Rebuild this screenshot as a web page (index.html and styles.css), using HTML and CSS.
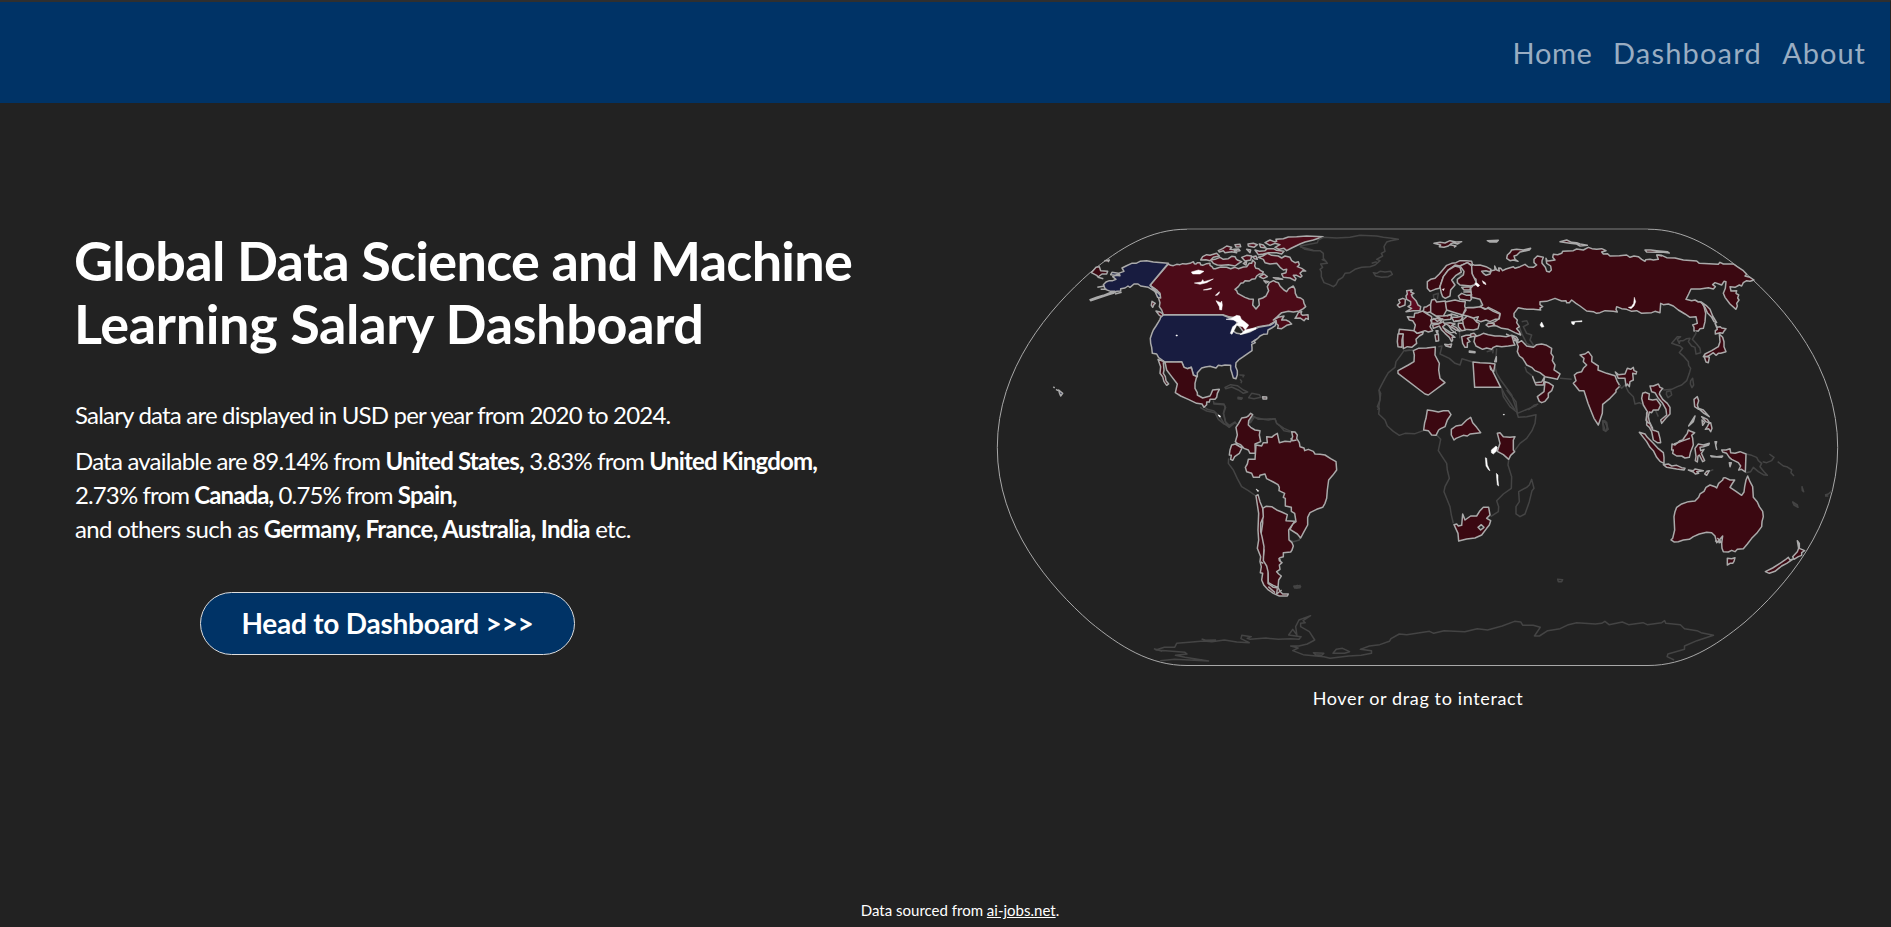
FILE: index.html
```html
<!DOCTYPE html>
<html lang="en">
<head>
<meta charset="utf-8">
<title>Global Data Science and Machine Learning Salary Dashboard</title>
<link rel="stylesheet" href="styles.css">
</head>
<body>
<header class="navbar">
  <nav class="nav-links">
    <a class="nav-home">Home</a>
    <a class="nav-dash">Dashboard</a>
    <a class="nav-about">About</a>
  </nav>
</header>
<main class="landing">
  <section class="intro">
    <h1><span class="title-top">Global Data Science and Machine</span><br>Learning Salary Dashboard</h1>
    <p class="lead">Salary data are displayed in USD per year from 2020 to 2024.</p>
    <p class="shares">Data available are 89.14% from <b>United States,</b> 3.83% from <b>United Kingdom,</b><br><span class="tight">2.73% from <b>Canada,</b> 0.75% from <b>Spain,</b></span><br><span class="loose">and others such as <b>Germany, France, Australia, India</b> etc.</span></p>
    <a class="cta">Head to Dashboard &gt;&gt;&gt;</a>
  </section>
  <section class="map">
    <svg class="world" viewBox="990 220 856 454" width="856" height="454">
      <!-- globe frame -->
      <path class="frame" d="M1187 665.5C1150 665.5 1120 646.7 1090 622C1050 586.7 997.3 526.7 997.3 447.4C997.3 368 1050 308 1090 272.7C1120 248 1150 229.2 1187 229.2M1648 229.2C1685 229.2 1715 248 1745 272.7C1785 308 1837.7 368 1837.7 447.4C1837.7 526.7 1785 586.7 1745 622C1715 646.7 1685 665.5 1648 665.5H1187"/>
      <path class="frame-top" d="M1187 229H1648"/>

      <!-- North America -->
      <g transform="translate(980 210) scale(.33333)">
        <path class="ghost" d="M735 532L752 524L772 527L790 540L803 546L790 550L775 540L755 531L737 536ZM806 563L815 550L838 554L843 562L822 566ZM774 562L787 564L784 568L774 566ZM778 495L792 496L788 502M780 508L785 514L783 520M672 590L682 598L702 603L718 618M700 572L702 582L732 584L737 592L731 610L737 636L748 646L765 636L770 643M718 618L732 640L748 652L754 645M808 612L815 625L812 638L822 622L850 628L885 626L890 640L912 655L940 667M960 110L1000 121"/>
        <path class="ca" d="M565 162L572 166L580 167L590 163L600 164L608 161L618 162L630 160L640 155L643 161L648 162L652 158L660 158L662 164L668 166L680 161L690 160L690 166L696 170L700 176L706 176L722 171L740 172L752 176L765 172L775 176L790 171L800 170L808 160L815 160L818 150L826 158L824 168L828 175L836 176L842 182L850 186L846 192L838 192L830 198L826 206L815 208L808 213L795 212L790 218L782 220L775 230L765 238L770 242L773 250L784 256L795 262L808 267L820 268L818 285L828 297L838 285L836 268L848 264L858 258L866 242L862 230L868 218L880 212L888 216L895 218L900 228L912 240L920 245L926 236L940 228L945 238L946 250L952 262L962 264L970 270L972 280L977 290L970 296L958 303L940 306L925 304L905 308L892 320L880 330L895 322L912 318L905 330L918 330L928 335L935 342L920 346L905 356L893 355L895 346L890 342L888 332L868 345L835 350L810 360L790 365L775 345L760 325L728 314L550 314L545 300L538 290L540 278L535 262L530 240L510 226Z"/>
        <path class="ca" d="M945 325L950 318L955 308L965 304L963 312L968 316L984 314L985 328L978 325L972 332L960 324ZM528 303L540 306L548 312L550 322L538 316ZM516 274L526 280L522 283L518 292L514 286ZM662 150L668 140L680 134L690 136L710 130L718 138L700 142L690 152L678 149ZM692 150L705 148L720 142L730 148L745 146L755 139L765 140L768 146L772 150L785 155L776 160L765 168L745 164L725 166L712 165L700 160ZM715 122L728 116L740 108L755 112L750 118L768 120L770 128L755 125L735 128L730 122L718 126ZM765 104L780 103L782 110L768 111ZM762 118L776 117L780 122L764 124ZM804 102L820 100L832 104L822 112L805 108ZM800 118L812 120L810 128ZM838 102L850 105L858 114L842 112ZM785 142L800 136L815 138L812 150L795 153ZM790 160L800 155L798 165ZM855 98L870 90L882 95L890 94L888 88L910 86L925 81L950 80L980 78L1030 80L1000 90L975 96L960 102L935 114L920 122L912 115L898 118L885 112L900 104L885 100L870 106ZM825 120L838 124L855 122L862 116L880 116L890 121L912 124L905 132L890 128L865 128L850 132L835 134ZM818 140L828 138L832 148L824 146ZM835 142L848 138L862 130L875 136L895 138L905 144L915 138L930 142L935 152L945 158L955 155L958 164L952 170L965 175L977 183L968 182L960 190L966 198L962 202L950 196L940 196L948 206L945 212L930 204L910 202L905 192L918 188L920 178L910 180L900 172L890 160L870 162L855 158L850 148ZM838 200L852 192L862 200L850 206ZM852 212L866 215L858 219ZM880 203L895 204L908 208L888 207Z"/>
        <path class="land" d="M334 188L348 172L358 170L362 182L383 184L380 192L366 192L354 201L350 196ZM373 152L388 150L384 156M354 202L370 206"/>
        <path class="us" d="M565 160L510 226L530 240L540 250L542 264L533 262L525 244L505 232L482 228L474 222L462 222L450 232L444 228L435 234L422 236L422 243L410 244L400 250L385 254L332 272L330 269L350 262L370 256L390 248L405 244L392 244L376 238L370 224L378 216L388 212L398 212L408 208L398 200L408 196L420 197L418 192L405 196L392 194L396 187L415 190L432 184L426 174L438 168L455 160L468 160L480 154L500 152L520 156Z"/>
        <path class="us" d="M550 315L728 315L745 322L775 322L770 340L758 362L770 370L785 372L808 366L835 352L870 346L880 340L888 332L886 347L875 354L864 360L862 372L850 373L840 378L832 386L822 394L826 398L815 403L816 412L816 422L804 430L790 440L778 448L768 458L767 470L772 482L772 494L768 506L760 504L756 490L752 478L752 466L735 465L725 467L715 466L708 474L690 469L676 471L665 474L652 488L652 500L640 495L634 472L622 476L612 472L605 455L590 458L575 456L555 456L536 443L530 432L517 430L515 412L512 400L511 385L516 370L520 360L528 348L536 335L540 328L542 322ZM236 540L248 550L242 558L238 548ZM220 530L224 534M228 538L234 542"/>
        <path class="line" d="M510 226L542 256M814 398L828 388M352 232L374 228M362 238L380 238M405 252L425 247M515 234L530 250"/>
        <path class="land" d="M534 448L555 456L560 480L575 500L592 522L586 548L602 558L625 568L650 580L666 582L672 592L680 584L680 576L688 576L690 568L705 568L710 562L712 550L718 538L698 540L694 550L690 558L668 564L652 555L652 548L645 535L645 520L650 500L640 495L634 472L622 476L612 472L605 455L560 456L550 458L552 480L550 490L556 500L558 512L566 522L560 526L552 515L548 500L540 490L542 470Z"/>
        <path class="land" d="M848 560L860 561L860 567L849 567Z"/>
        <path class="lake" d="M634 186L655 180L672 184L660 192L638 192ZM643 219L664 216L668 209L672 215L700 207L680 218L660 223ZM670 240L694 234L694 237L680 240ZM706 256L718 245L718 249L712 256ZM708 272L722 278L725 273L727 285L725 300L719 299L718 290ZM738 328L756 324L770 316L780 318L784 328L795 336L806 345L803 350L795 360L803 358L828 353L828 357L800 368L780 374L796 360L788 350L770 346L764 358L756 373L751 370L758 350L775 338L760 330ZM588 375L592 375L592 378L588 378ZM715 615L721 618L720 622Z"/>
      </g>

      <!-- Greenland, Iceland and West Africa -->
      <g transform="translate(1180 210) scale(.33333)">
        <path class="ghost" d="M360 108L375 118L400 122L420 122L430 130L430 145L442 160L422 162L428 172L420 178L424 185L424 200L432 218L448 224L460 230L468 224L475 210L488 202L495 190L510 188L525 178L545 172L570 170L585 165L600 152L590 148L608 138L604 130L615 124L612 110L620 96L632 92L655 88L635 85L610 82L590 78L540 76L510 82L470 84L430 82L415 90L412 98ZM580 188L590 190L600 184L615 186L632 184L637 193L625 200L605 202L587 198ZM425 148L440 155M590 155L575 160M690 420L672 422L662 436L648 455L645 472L625 488L615 505L602 530L597 540L600 565L596 594L593 600"/>
      </g>

      <!-- Europe, North Africa, Russia, Middle East and India -->
      <g transform="translate(1380 210) scale(.33333)">
        <path class="ghost" d="M100 420L75 422M175 410L186 408L180 432L208 445L225 460L240 465L246 446L278 456M345 470L350 490L362 510L395 555L410 600M362 530L375 555L385 570L405 600M435 470L440 485L460 500M540 505L575 508M445 600L462 586L475 582M425 335L440 332L445 342L430 350L440 370L455 375L450 390L460 405L458 410L440 400L425 370L418 350M162 270L160 255L175 250L172 268M235 195L250 192L232 208M320 425L340 420L338 430M350 415L348 440M258 268L272 268L288 260L302 266L305 275L300 290L262 290M238 362L240 385M230 345L222 350"/>
        <path class="land" d="M270 160L285 166L300 165L318 170L333 178L330 186L318 182L305 184L310 190L318 196L330 192L334 182L345 180L344 168L350 180L358 183L356 174L362 175L368 182L378 177L400 170L405 175L420 170L435 163L445 171L460 172L470 165L462 158L462 148L472 138L490 142L486 152L486 160L496 172L500 184L508 186L514 180L512 168L500 160L498 145L502 153L510 152L525 150L518 142L520 133L533 134L545 130L548 124L580 122L590 117L610 120L625 112L636 116L650 118L665 116L678 122L665 126L670 132L682 131L690 138L718 137L740 135L750 142L762 138L775 140L785 148L795 154L797 149L810 148L820 150L835 148L830 135L845 136L860 143L885 144L910 150L950 153L958 160L1015 163L1020 157L1030 162L1060 162L1075 172L1090 182L1100 193L1095 198L1110 202L1122 210L1110 214L1100 212L1090 218L1085 228L1078 225L1065 232L1050 230L1053 243L1070 242L1068 250L1076 255L1073 264L1077 270L1070 280L1072 288L1068 298L1050 282L1035 262L1030 250L1036 235L1038 215L1032 214L1025 225L1005 218L998 224L1006 230L1000 237L985 233L960 237L933 237L926 252L918 268L935 272L945 270L955 276L960 275L968 282L972 290L977 310L975 335L970 355L960 356L955 363L942 363L942 352L938 345L952 340L948 320L930 322L915 312L895 300L880 288L865 282L850 284L842 280L840 308L825 304L815 308L785 310L770 302L755 304L740 298L725 296L710 290L708 298L712 306L700 304L675 302L660 308L650 310L640 305L620 303L600 288L588 280L575 270L568 278L560 278L558 272L545 273L525 265L500 274L480 275L480 284L488 290L480 294L482 300L460 298L440 298L415 293L402 310L402 320L412 330L410 338L418 350L410 356L418 365L422 375L405 368L385 358L365 355L350 348L322 344L345 335L358 325L360 310L345 302L325 292L318 297L300 290L308 285L300 268L275 262L272 235L278 228L288 220L288 208L278 200L275 185L272 170Z"/>
        <path class="land" d="M142 215L152 208L165 205L178 192L190 178L200 166L215 160L228 158L240 152L258 152L275 154L278 166L262 158L240 168L225 165L205 180L190 200L178 235L165 238L150 244L142 235Z"/>
        <path class="land" d="M225 168L240 172L244 186L228 196L215 210L225 225L212 240L210 258L196 265L188 260L184 250L180 230L190 200L205 180Z"/>
        <path class="land" d="M240 168L262 158L275 168L276 190L288 215L285 224L272 228L240 225L232 218L232 208L250 195L252 184Z"/>
        <path class="land" d="M162 100L180 97L195 99L210 92L228 96L245 95L232 102L220 98L212 102L205 108L192 112L178 110L182 105ZM210 104L228 108L222 112M322 92L355 91L350 96L330 96ZM380 145L382 135L390 128L395 120L410 118L430 120L452 115L448 120L420 126L410 136L402 138L405 148L414 154L400 150L390 152ZM540 95L560 90L575 97L590 98L600 102L622 106L600 108L590 102L570 100ZM795 120L812 120L830 122L862 125L868 129L850 127L830 127L800 126ZM832 135L846 138"/>
        <path class="land" d="M52 285L60 278L56 270L68 265L76 268L75 285L58 292ZM82 360L102 362L112 370L130 365L128 372L118 378L108 388L110 400L95 412L82 410L70 416L68 372L56 372L58 358Z"/>
        <path class="land" d="M54 372L70 372L66 390L66 412L54 410L52 395Z"/>
        <path class="uk" d="M80 242L96 240L92 246L102 250L94 254L98 262L108 272L114 285L122 290L120 302L100 302L78 305L95 295L84 290L92 285L92 275L80 268L78 258L82 252Z"/>
        <path class="land" d="M82 320L102 322L104 310L115 308L128 303L142 312L155 320L155 338L150 350L158 362L145 366L135 362L112 370L102 362L106 345L98 332L88 330ZM152 282L155 270L165 268L170 276L178 275L196 273L198 290L200 300L190 318L168 318L152 308ZM130 304L132 292L140 290L152 282L152 305L142 308ZM196 276L225 270L240 274L256 275L254 288L258 300L248 315L225 308L200 300ZM258 293L280 293L300 290L315 298L325 295L340 304L360 312L356 328L345 328L330 335L318 330L302 335L290 330L295 320L280 324L262 318L248 315ZM152 330L170 325L185 330L178 340L155 340ZM168 318L190 318L215 315L212 328L190 330ZM158 345L175 342L190 335L195 345L188 350L198 364L220 378L225 382L216 382L218 390L215 395L208 382L195 370L185 360L178 348L160 355ZM194 403L205 404L215 402L212 412L198 408ZM165 375L175 372L176 392L168 394ZM168 362L174 362L172 372ZM215 322L230 322L248 318L245 330L222 335ZM248 330L262 318L280 325L290 336L298 340L294 356L280 360L255 358L250 345ZM195 340L210 338L225 342L215 346L228 352L240 364L228 360L212 350ZM235 340L248 340L256 360L245 362L235 350ZM245 380L258 376L275 375L275 380L262 385L270 395L262 398L262 412L255 412L248 400ZM268 423L285 425L285 428L268 427ZM245 232L272 230L270 240L252 240ZM235 258L245 250L260 256L272 255L274 268L270 272L240 268ZM250 246L272 245L275 255"/>
        <path class="line" d="M188 352L212 368L228 366M205 345L215 360L230 372M200 318L215 312L235 318M160 324L172 334L190 326M225 333L240 332L250 322M378 372L400 382L412 384M322 340L345 342"/>
        <path class="land" d="M285 380L298 376L310 370L325 374L345 378L360 378L378 380L395 376L406 388L400 395L405 405L385 408L365 410L350 408L340 412L335 418L320 414L308 418L288 408L282 395ZM272 372L282 370L290 378L272 380ZM318 345L325 340L338 340L345 346L325 350ZM395 376L408 380L415 390L400 392Z"/>
        <path class="land" d="M405 385L415 398L425 392L440 408L460 412L470 404L485 402L500 406L515 415L513 430L520 440L517 452L525 465L522 480L540 492L532 508L515 504L495 500L480 488L465 482L455 472L440 465L428 445L418 438L412 425L415 410Z"/>
        <path class="land" d="M458 500L465 518L485 516L494 500L490 525L468 525ZM495 515L505 518L520 528L515 542L505 550L505 562L495 574L485 578L478 574L472 560L492 545Z"/>
        <path class="land" d="M100 422L115 415L140 414L166 411L165 435L178 460L176 480L180 505L195 518L145 555L135 552L54 490L54 482L85 465L102 455L103 435ZM279 456L300 458L330 460L345 462L341 485L332 478L330 468L346 500L362 532L284 532ZM344 455L349 440L349 455Z"/>
        <path class="land" d="M600 435L615 432L625 425L636 440L635 455L655 468L654 480L680 490L705 497L712 515L720 528L708 540L708 546L690 565L668 583L667 610L655 645L642 625L634 605L624 580L612 542L598 542L580 520L588 512L583 495L592 488L605 485L610 475L620 465L610 455L612 445Z"/>
        <path class="lake" d="M284 222L290 218L299 226L294 231ZM307 212L316 218L318 224L310 220ZM480 345L485 336L492 350L485 352ZM574 335L606 332L606 335L585 336L582 344L576 342ZM745 292L754 290L761 280L763 262L767 275L762 288L753 296ZM187 238L193 236L190 242Z"/>
      </g>

      <!-- East Asia -->
      <g transform="translate(1590 210) scale(.33333)">
        <path class="ghost" d="M316 362L318 370L307 388L320 402L330 415L332 428L318 432L315 412L305 408L295 395L300 385L290 386L280 392L270 392L268 400L262 388L272 380L262 380L245 400L258 404L270 408L278 415L268 428L282 440L295 455L296 466L302 475L298 490L290 512L275 525L262 530L245 538L222 540L218 535M230 545L242 542L245 555L234 563L229 553ZM302 512L308 505L311 525L306 533L301 522ZM88 525L95 535L105 525L115 545L130 560L135 582L148 578L155 582M196 600L205 620M40 630L50 637L54 660"/>
        <path class="land" d="M76 486L85 494L105 492L112 475L122 478L130 472L132 482L140 485L138 492L128 490L130 510L120 515L118 530L112 522L108 528L105 505L85 505ZM334 276L348 286L360 298L368 318L380 338L372 335L365 322L352 308L345 292ZM375 340L382 352L390 350L395 354L408 356L403 362L398 370L390 368L376 372L376 362L382 358ZM388 372L398 382L402 395L402 410L408 425L392 430L385 430L378 436L370 428L358 436L350 440L340 440L345 432L365 422L385 410L390 395ZM342 438L358 442L355 458L348 456Z"/>
        <path class="land" d="M180 528L190 528L205 522L210 532L218 535L210 545L208 552L218 568L232 580L240 592L240 612L228 624L215 640L212 630L230 615L228 598L218 580L205 565L195 548L185 545ZM155 565L158 550L167 547L178 552L176 568L188 570L200 568L212 585L205 600L190 600L185 608L178 606L175 620L178 635L188 655L180 650L168 630L172 605L160 585ZM312 568L322 560L326 572L322 585L326 598L314 590Z"/>
      </g>

      <!-- South America -->
      <g transform="translate(1200 390) scale(.33333)">
        <path class="ghost" d="M0 52L20 63L45 68L55 88M40 40L72 42L75 52L70 70L76 95L90 110L105 98M55 88L72 102L80 104L88 112L95 105M152 82L148 98L152 90L160 78L175 88L190 88L205 90L225 86L230 100L240 108L252 122L272 126M86 205L85 220L100 240L112 266L125 290L145 302L168 318M268 450L280 455L298 450L300 440M282 588L290 590L300 586L300 593L284 594Z"/>
        <path class="land" d="M108 112L116 100L125 84L138 82L145 78L152 70L158 74L146 92L145 105L152 112L165 120L180 122L178 135L182 155L165 162L166 190L150 190L145 180L132 175L122 164L112 160L106 155L112 135ZM90 180L95 165L106 162L126 174L118 190L104 200L98 211L92 208L94 196L88 195Z"/>
        <path class="land" d="M200 140L215 142L222 136L232 130L238 158L255 154L272 155L278 140L275 125L285 126L292 135L290 145L298 158L300 170L312 174L314 182L325 178L340 184L345 192L360 193L375 195L392 206L408 215L410 240L398 256L386 270L382 300L380 325L375 340L368 352L350 358L330 368L323 382L323 405L312 425L302 444L292 432L270 418L278 402L288 395L284 370L274 364L274 352L256 348L256 325L250 322L254 310L237 302L238 292L234 284L220 276L200 266L195 252L180 256L178 262L160 262L155 250L140 245L136 232L142 222L145 208L165 208L168 165L185 168L190 158L202 158Z"/>
        <path class="land" d="M188 355L198 349L215 350L230 360L245 366L262 374L258 392L284 394L266 420L267 450L276 458L280 468L276 480L272 486L250 488L250 500L240 503L238 505L238 512L246 518L238 525L240 538L230 545L236 552L244 558L236 570L234 592L220 586L205 578L204 550L196 530L188 515L192 480L184 465L182 440L188 400Z"/>
        <path class="land" d="M168 318L174 314L180 335L188 355L190 380L182 400L182 425L186 440L192 470L190 512L200 528L204 545L204 580L220 592L235 594L240 604L248 612L265 612L262 618L238 618L220 610L205 600L192 586L185 570L188 550L181 548L184 530L180 515L182 500L172 475L176 450L174 420L176 370Z"/>
        <path class="line" d="M232 595L230 612L245 600M236 505L242 512M205 590L225 608M182 516L190 520M272 145L278 152L290 150"/>
        <path class="lake" d="M54 75L61 78L59 81ZM168 297L176 302L174 305Z"/>
      </g>

      <!-- Sub-Saharan Africa -->
      <g transform="translate(1370 390) scale(.33333)">
        <path class="ghost" d="M27 0L32 10L30 30L22 50L28 55L26 72L45 90L52 108L70 124L88 136L105 130L135 131L162 121M200 135L212 148L205 182L218 202L230 220L232 240L238 265L225 290L222 305L240 350L244 375L250 400M396 0L400 20L420 50L440 66L445 82L470 80L498 74L495 100L486 122L470 145L450 160L434 182M410 0L438 35L442 70L500 46M416 210L414 225L425 260L424 295L400 312L380 332L386 350L385 365L362 380M485 268L492 295L486 302L478 335L465 372L450 380L438 372L438 350L448 335L446 305L470 292L478 285ZM698 97L705 93L714 118L706 124ZM563 568L578 569L575 575L565 575Z"/>
        <path class="land" d="M172 60L188 62L205 66L220 62L235 62L243 74L232 90L225 110L212 116L206 120L198 136L185 135L175 122L161 120L164 98L168 85ZM244 118L258 108L275 105L290 90L302 82L308 98L320 112L332 128L300 132L292 138L280 136L258 145L252 150L244 135ZM382 130L390 128L400 140L420 142L435 140L430 150L430 180L434 185L422 196L416 208L400 194L382 184L390 160ZM252 404L260 402L265 408L275 406L278 372L285 390L302 378L320 378L330 362L340 352L356 352L360 375L350 385L362 392L358 405L350 415L335 435L315 444L290 447L266 453L264 430Z"/>
        <path class="hole" d="M324 412L334 404L342 412L332 420Z"/>
        <path class="lake" d="M364 180L378 168L382 172L379 184L370 192L364 188ZM346 203L350 205L352 225L360 242L356 240L348 228ZM379 250L384 255L384 270L386 288L382 285L380 265ZM400 73L403 73L403 75L400 75Z"/>
      </g>

      <!-- South East Asia and Oceania -->
      <g transform="translate(1600 370) scale(.33333)">
        <path class="ghost" d="M438 252L455 256L470 262L475 272L485 280L480 290L492 305L502 316L490 314L475 305L460 292L452 305L438 308M488 275L500 278L515 272L522 262L508 252M533 275L550 288L560 290L575 300L573 308L582 318M606 350L611 365L607 362ZM578 396L592 405L594 412L582 405ZM675 375L685 372L690 368L695 362M675 378L685 378M8 152L18 160L22 172L18 183L10 180ZM325 305L340 299"/>
        <path class="land" d="M140 128L140 155L150 162L158 180L165 182L175 186L180 205L182 218L172 218L160 210L155 185L148 172L140 165ZM118 187L135 192L142 202L160 220L175 236L190 248L192 262L192 280L180 274L170 262L160 242L150 232L140 215L130 202ZM190 284L205 282L215 288L230 286L245 293L255 295L252 300L230 297L200 292ZM216 222L225 225L240 212L248 210L256 198L262 190L265 180L272 184L284 188L275 196L278 205L280 225L272 245L268 262L255 264L245 258L230 258L218 250L220 240L215 240ZM285 235L295 222L310 225L328 220L326 225L310 230L300 232L302 242L312 238L304 250L314 272L308 275L298 255L294 258L292 276L286 272L288 260ZM295 115L310 120L328 140L312 130ZM305 140L322 148L330 160L318 155ZM316 178L322 170L326 162L332 158L336 175L332 185L326 176ZM266 168L285 138L280 155ZM306 150L308 166L314 158ZM345 215L350 215L347 226L350 238ZM332 257L350 260L368 258L365 262L335 260ZM265 300L280 302L285 297L310 302L290 305L296 310L286 312L280 306ZM314 312L320 304L328 302L320 316ZM365 240L378 240L390 236L392 248L405 250L420 245L438 252L436 306L425 298L416 300L422 288L415 278L395 268L388 262L380 250L368 246ZM388 278L394 278L390 290Z"/>
        <path class="land" d="M222 440L225 425L230 412L245 402L265 395L285 393L296 382L300 372L312 364L318 352L330 345L345 350L350 354L356 340L368 330L370 324L375 323L390 330L404 330L396 342L390 352L408 364L425 376L432 366L434 350L438 330L443 318L450 335L458 350L460 382L472 396L478 410L488 424L490 440L486 455L485 470L470 490L455 505L442 522L430 536L412 538L405 545L395 541L385 546L370 545L366 535L365 520L368 498L358 510L350 518L345 498L335 488L320 487L298 492L280 500L268 508L250 510L235 515L222 516L213 510L218 505L224 480ZM382 565L395 566L405 563L402 574L398 580L390 580L382 585ZM592 512L598 520L598 535L614 542L605 548L605 556L595 560L582 568L578 560L592 545L596 535ZM496 605L518 594L540 580L555 570L565 562L570 570L578 568L560 580L545 588L525 604L508 610Z"/>
        <path class="line" d="M352 504L362 514L356 520M222 222L250 212L270 205M345 512L366 518"/>
      </g>

      <!-- Antarctica -->
      <g transform="translate(1100 560) scale(.41454 .33333)">
        <path class="ghost" d="M145 302L180 298L262 303L205 292L182 286L210 282L205 277L135 270L155 262L180 262L185 250L215 247L250 243L270 245L300 240L330 246L360 248L340 236L342 226L365 230L355 235L362 238L400 234L430 238L460 236L480 238L485 230L455 225L465 208L475 225L472 200L480 180L508 167L490 182L495 188L484 190L484 200L505 215L518 240L500 252L480 258L460 258L478 264L465 272L490 284L540 290L555 295L600 288L630 286L655 280L655 272L628 268L650 258L675 254L698 244L702 236L722 222L740 224L795 214L805 220L830 212L880 215L910 206L935 210L970 198L1000 184L1015 186L1020 196L1045 196L1062 202L1048 228L1060 228L1080 212L1110 206L1130 194L1150 188L1195 192L1210 190L1218 184L1228 194L1260 186L1275 194L1310 188L1320 194L1355 188L1362 182L1365 190L1400 194L1410 206L1440 212L1450 218L1480 226L1440 242L1410 258L1410 268L1370 282L1368 290L1385 300M562 280L570 268L585 265L602 275L590 280ZM515 278L540 280L535 286L520 284ZM468 80L476 76L484 80L474 84ZM130 266L150 274M245 237L255 241L280 240"/>
      </g>
    </svg>
    <p class="caption">Hover or drag to interact</p>
  </section>
</main>
<footer class="source">Data sourced from <a>ai-jobs.net</a>.</footer>
</body>
</html>
```
FILE: styles.css
```css
* { box-sizing: border-box; }
body {
  margin: 0;
  height: 927px;
  display: flex;
  flex-direction: column;
  background: #222;
  color: #fff;
  font-family: Lato, sans-serif;
  overflow: hidden;
}
.navbar {
  height: 103px;
  flex: none;
  border-top: 2px solid #2f2f2f;
  border-right: 1px solid #222;
  background: #036;
  background-clip: padding-box;
}
.nav-links {
  display: flex;
  justify-content: flex-end;
  gap: 20.3px;
  padding: 33px 24px 0 0;
  font-size: 29px;
  line-height: 36px;
  color: #99adc2;
}
.nav-home { letter-spacing: .7px; }
.nav-dash { letter-spacing: 1.2px; }
.nav-about { letter-spacing: 1px; }
.landing {
  flex: 1;
  display: grid;
  grid-template-columns: 990px 856px;
}
.intro { padding: 126px 0 0 74px; }
h1 {
  margin: 0;
  font-size: 54px;
  line-height: 63px;
  letter-spacing: -.35px;
  white-space: nowrap;
}
.title-top { letter-spacing: -.74px; }
.lead, .shares {
  margin: 0 0 0 1px;
  font-size: 24px;
  line-height: 34px;
  letter-spacing: -.8px;
  white-space: nowrap;
}
.lead { margin-top: 43px; }
.shares { margin-top: 12px; }
.tight { letter-spacing: -.88px; }
.loose { letter-spacing: -.67px; }
.cta {
  display: flex;
  align-items: center;
  justify-content: center;
  width: 375px;
  height: 63px;
  margin: 46px 0 0 126px;
  padding-bottom: 2px;
  border: 1px solid #ddd;
  border-radius: 32px;
  background: #036;
  font-size: 28px;
  font-weight: 700;
  letter-spacing: -.24px;
}
.map { padding-top: 117px; }
.world { display: block; }
.world path { vector-effect: non-scaling-stroke; stroke-linejoin: round; stroke-width: 1.5px; }
.world .frame { fill: none; stroke: #a8a8a8; stroke-width: 1px; }
.world .frame-top { fill: none; stroke: #505050; stroke-width: 2px; }
.land { fill: #3b0811; stroke: #aaa; }
.ca { fill: #4c0b18; stroke: #aaa; }
.uk { fill: #5b0a20; stroke: #aaa; }
.us { fill: #181c40; stroke: #aaa; }
.hole { fill: #222; stroke: #aaa; }
.line { fill: none; stroke: #aaa; }
.ghost { fill: none; stroke: #444; }
.lake { fill: #fff; stroke: #fff; }
.world .lake { stroke-width: .5px; }
.caption {
  margin: 13px 0 0;
  text-align: center;
  font-size: 18px;
  line-height: 22px;
  letter-spacing: .63px;
}
.source {
  flex: none;
  height: 28px;
  padding-left: 29px;
  text-align: center;
  font-size: 15px;
  line-height: 22px;
}
.source a { text-decoration: underline; }
```
